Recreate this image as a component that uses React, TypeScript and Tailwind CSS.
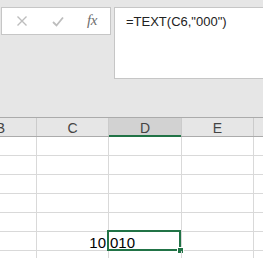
import React from 'react'

const cols = [
  { key: 'B', label: 'B', w: 'w-[72px] -ml-[35px]' },
  { key: 'C', label: 'C', w: 'w-[72px]' },
  { key: 'D', label: 'D', w: 'w-[73px]' },
  { key: 'E', label: 'E', w: 'w-[72px]' },
  { key: 'F', label: '', w: 'w-[72px]' },
]

const rows = [1, 2, 3, 4, 5, 6, 7]

const App = () => {
  return (
    <div className="w-[263px] h-[258px] overflow-hidden bg-white" style={{ fontFamily: '"Liberation Sans", Arial, sans-serif' }}>
      {/* formula bar */}
      <div className="h-[117px] bg-[#e6e6e6] flex items-start pt-[7px]">
        <div className="ml-[1px] w-[110px] h-[28px] bg-white border border-[#c6c6c6] flex items-center shrink-0">
          <svg width="12" height="12" viewBox="0 0 12 12" className="ml-[14px] mt-[-1px]">
            <path d="M1.5 1.5 L10.5 10.5 M10.5 1.5 L1.5 10.5" stroke="#bdbdbd" strokeWidth="1.4" fill="none" />
          </svg>
          <svg width="12" height="11" viewBox="0 0 12 11" className="ml-[24px] mt-[1px]">
            <path d="M1 6 L4.5 9.5 L11 1.5" stroke="#bdbdbd" strokeWidth="1.8" fill="none" />
          </svg>
          <span
            className="ml-[23px] mt-[-2px] text-[15px] italic text-[#6e6e6e] tracking-[-0.5px]"
            style={{ fontFamily: '"Liberation Serif", "Times New Roman", serif' }}
          >
            fx
          </span>
        </div>
        <div className="ml-[3px] flex-1 h-[72px] bg-white border border-r-0 border-[#c6c6c6] pl-[11px] pt-[6px]">
          <div className="text-[13px] leading-[16px] text-[#222]">=TEXT(C6,"000")</div>
        </div>
      </div>

      {/* column headers */}
      <div className="flex h-[20px] bg-[#e6e6e6] border-t border-b border-[#ababab]">
        {cols.map((c) => (
          <div
            key={c.key}
            className={`${c.w} shrink-0 relative border-r border-[#cbcbcb] flex justify-center pt-[2px] text-[14px] leading-[17px] text-[#444] ${
              c.key === 'D' ? 'bg-[#d2d2d2]' : ''
            }`}
          >
            {c.label}
            {c.key === 'D' && <div className="absolute left-0 right-0 bottom-[-1px] h-[2px] bg-[#217346]" />}
          </div>
        ))}
      </div>

      {/* grid */}
      {rows.map((r) => (
        <div key={r} className="flex h-[19px] border-b border-[#d9d9d9]">
          {cols.map((c) => (
            <div key={c.key} className={`${c.w} shrink-0 relative border-r border-[#d9d9d9] text-[15px] leading-[15px] text-black`}>
              {r === 6 && c.key === 'C' && <div className="text-right pr-[2px] pt-[3px]">10</div>}
              {r === 6 && c.key === 'D' && (
                <>
                  <div className="pl-[1px] pt-[3px]">010</div>
                  <div className="absolute -left-[2px] -top-[2px] w-[74px] h-[21px] border-2 border-[#217346]" />
                  <div className="absolute left-[69px] top-[16px] w-[5px] h-[5px] bg-[#217346] outline outline-1 outline-white" />
                </>
              )}
            </div>
          ))}
        </div>
      ))}
    </div>
  )
}

export default App
